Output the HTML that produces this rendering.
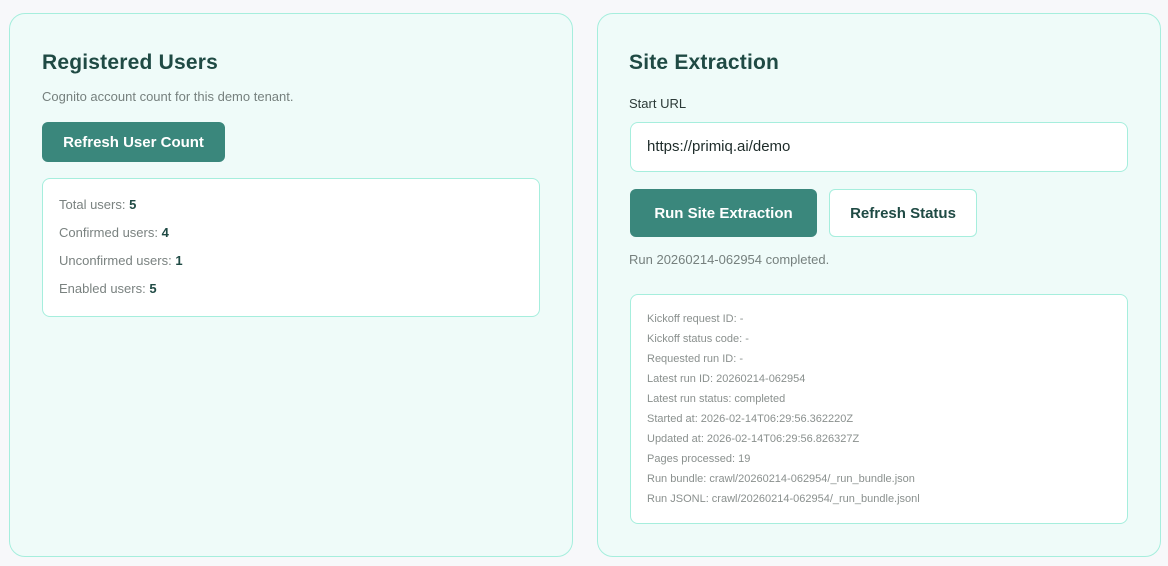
<!DOCTYPE html><html><head><style>
*{box-sizing:border-box;margin:0;padding:0}
body{width:1168px;height:566px;background:#f7f8fa;font-family:"Liberation Sans",sans-serif;position:relative;overflow:hidden}
.card{position:absolute;top:13px;width:564px;height:544px;background:#effbf9;border:1px solid #a6eedd;border-radius:16px}
.a{position:absolute;white-space:nowrap}
h2{position:absolute;font-size:21px;font-weight:bold;color:#1f4a44;letter-spacing:0.2px}
.btn{position:absolute;background:#3a877c;color:#fff;font-weight:bold;font-size:15px;border-radius:6px;display:flex;align-items:center;justify-content:center}
.box{position:absolute;background:#fff;border:1px solid #a6eedd;border-radius:8px}
.r{position:absolute;font-size:13px;color:#7a8280;white-space:nowrap}
.r b{color:#1f4a44}
.s{position:absolute;font-size:11px;color:#8a908e;white-space:nowrap;left:16px}
</style></head><body>
<div class="card" style="left:9px">
<h2 style="left:32px;top:37px">Registered Users</h2>
<div class="a" style="left:32px;top:75px;font-size:13px;color:#76807e">Cognito account count for this demo tenant.</div>
<div class="btn" style="left:32px;top:108px;width:183px;height:40px">Refresh User Count</div>
<div class="box" style="left:32px;top:164px;width:498px;height:139px">
<div class="r" style="left:16px;top:18px">Total users: <b>5</b></div>
<div class="r" style="left:16px;top:46px">Confirmed users: <b>4</b></div>
<div class="r" style="left:16px;top:74px">Unconfirmed users: <b>1</b></div>
<div class="r" style="left:16px;top:102px">Enabled users: <b>5</b></div>
</div></div>
<div class="card" style="left:597px">
<h2 style="left:31px;top:37px">Site Extraction</h2>
<div class="a" style="left:31px;top:82px;font-size:13px;color:#2c3a38">Start URL</div>
<div class="box" style="left:32px;top:108px;width:498px;height:50px;border-radius:8px"><div class="a" style="left:16px;top:15px;font-size:15px;color:#1d2b29">https://primiq.ai/demo</div></div>
<div class="btn" style="left:32px;top:175px;width:187px;height:48px">Run Site Extraction</div>
<div class="btn" style="left:231px;top:175px;width:148px;height:48px;background:#fff;border:1px solid #a6eedd;color:#1f4a44">Refresh Status</div>
<div class="a" style="left:31px;top:238px;font-size:13px;color:#76807e">Run 20260214-062954 completed.</div>
<div class="box" style="left:32px;top:280px;width:498px;height:230px">
<div class="s" style="top:18px">Kickoff request ID: -</div>
<div class="s" style="top:38px">Kickoff status code: -</div>
<div class="s" style="top:58px">Requested run ID: -</div>
<div class="s" style="top:78px">Latest run ID: 20260214-062954</div>
<div class="s" style="top:98px">Latest run status: completed</div>
<div class="s" style="top:118px">Started at: 2026-02-14T06:29:56.362220Z</div>
<div class="s" style="top:138px">Updated at: 2026-02-14T06:29:56.826327Z</div>
<div class="s" style="top:158px">Pages processed: 19</div>
<div class="s" style="top:178px">Run bundle: crawl/20260214-062954/_run_bundle.json</div>
<div class="s" style="top:198px">Run JSONL: crawl/20260214-062954/_run_bundle.jsonl</div>
</div></div>
</body></html>
